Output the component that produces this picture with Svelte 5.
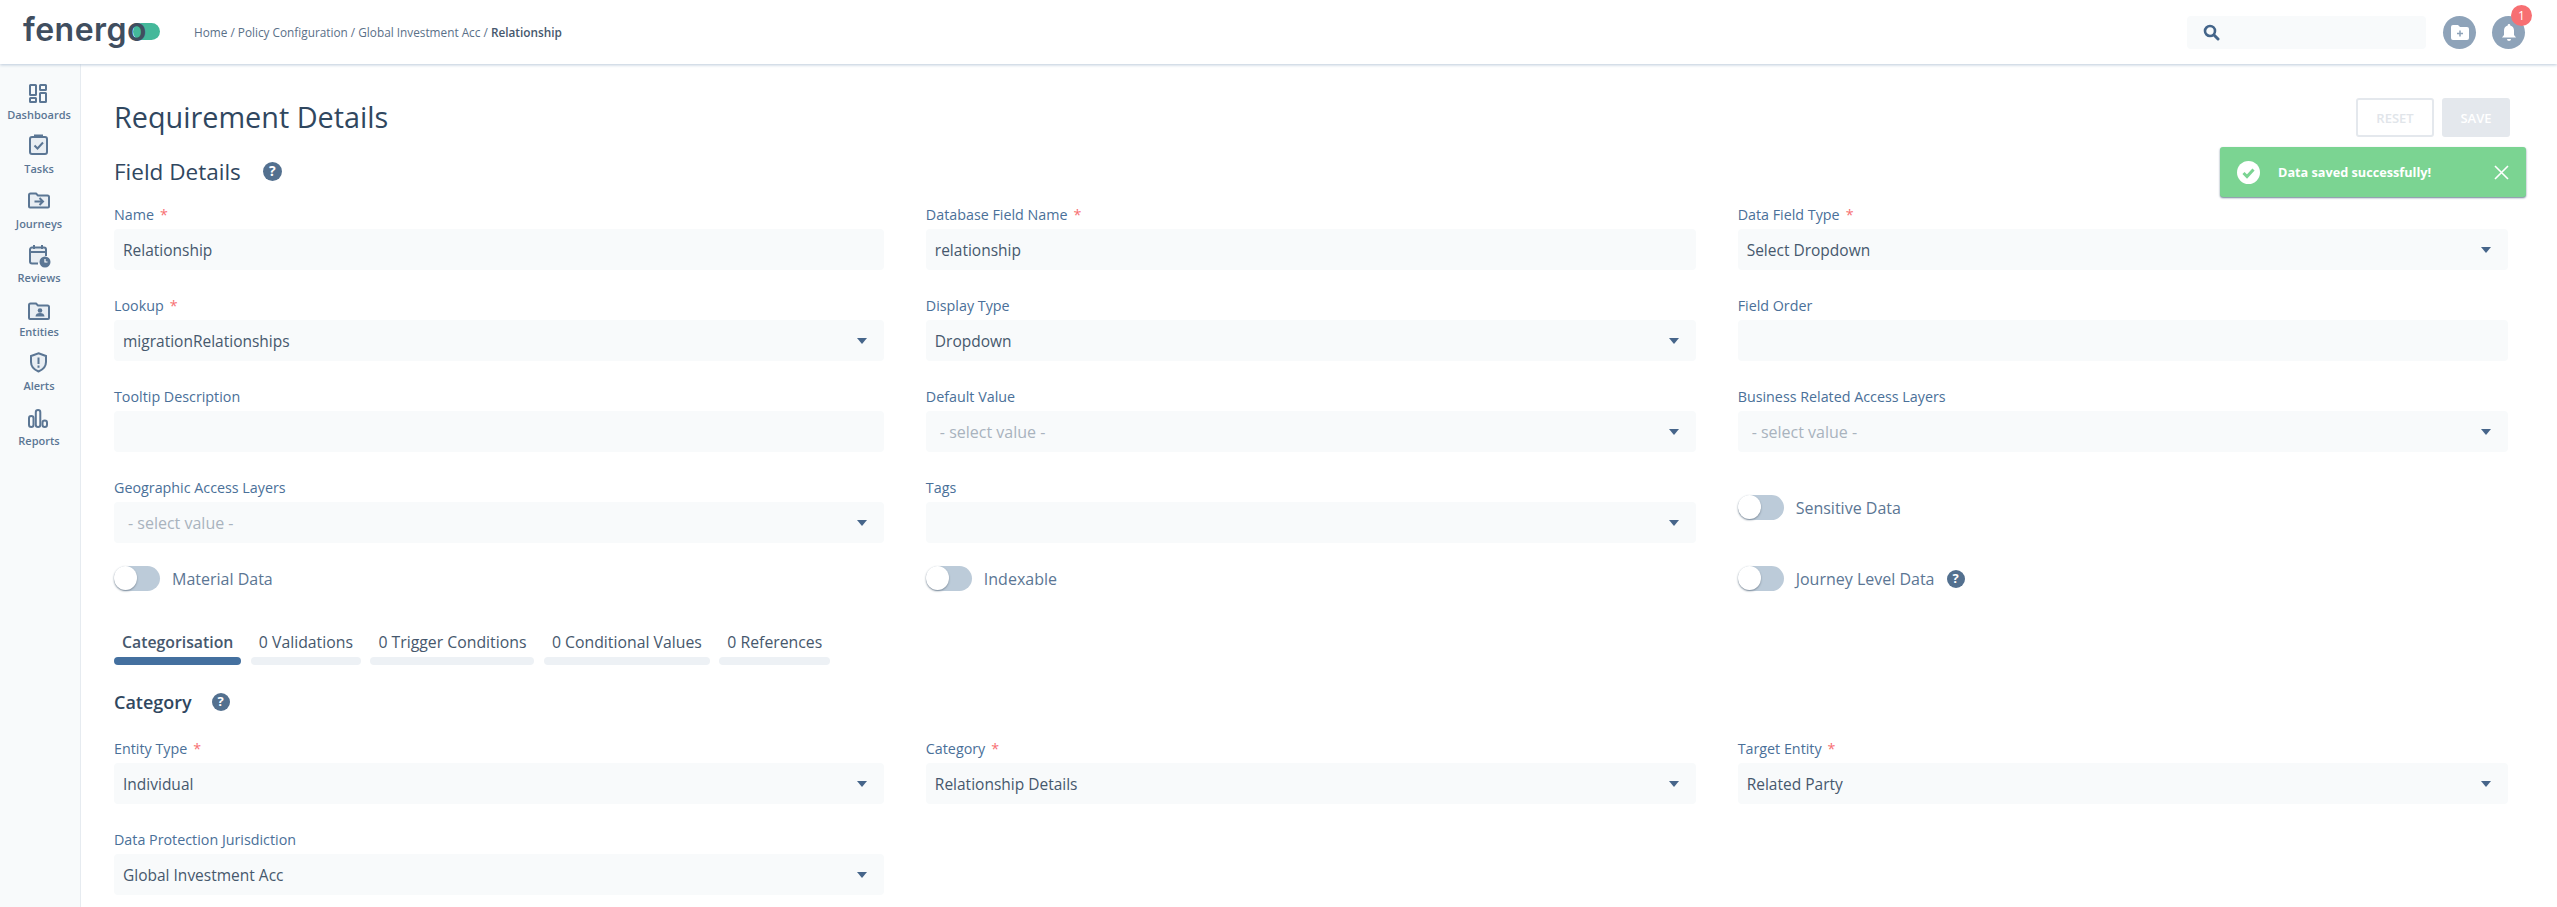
<script>
  const nav = [
    { label: 'Dashboards', icon: 'dash' },
    { label: 'Tasks', icon: 'tasks' },
    { label: 'Journeys', icon: 'journeys' },
    { label: 'Reviews', icon: 'reviews' },
    { label: 'Entities', icon: 'entities' },
    { label: 'Alerts', icon: 'alerts' },
    { label: 'Reports', icon: 'reports' }
  ];

  const fields = [
    { label: 'Name', req: true, value: 'Relationship' },
    { label: 'Database Field Name', req: true, value: 'relationship' },
    { label: 'Data Field Type', req: true, value: 'Select Dropdown', select: true },
    { label: 'Lookup', req: true, value: 'migrationRelationships', select: true },
    { label: 'Display Type', value: 'Dropdown', select: true },
    { label: 'Field Order', value: '' },
    { label: 'Tooltip Description', value: '' },
    { label: 'Default Value', placeholder: '- select value -', select: true },
    { label: 'Business Related Access Layers', placeholder: '- select value -', select: true },
    { label: 'Geographic Access Layers', placeholder: '- select value -', select: true },
    { label: 'Tags', value: '', select: true }
  ];

  const tabs = [
    { label: 'Categorisation', active: true },
    { label: '0 Validations' },
    { label: '0 Trigger Conditions' },
    { label: '0 Conditional Values' },
    { label: '0 References' }
  ];

  const category = [
    { label: 'Entity Type', req: true, value: 'Individual', select: true },
    { label: 'Category', req: true, value: 'Relationship Details', select: true },
    { label: 'Target Entity', req: true, value: 'Related Party', select: true },
    { label: 'Data Protection Jurisdiction', value: 'Global Investment Acc', select: true }
  ];
</script>

{#snippet help(size)}
  <span class="help" style="width:{size}px;height:{size}px;font-size:{size - 5}px">?</span>
{/snippet}

{#snippet field(f)}
  <div class="field">
    <div class="lbl">{f.label}{#if f.req}<span class="req">*</span>{/if}</div>
    <div class="box">
      {#if f.placeholder}<span class="ph">{f.placeholder}</span>{:else}<span>{f.value}</span>{/if}
      {#if f.select}<span class="arrow"></span>{/if}
    </div>
  </div>
{/snippet}

{#snippet toggle(label, cls, tip)}
  <div class="toggle {cls}">
    <span class="track"><span class="knob"></span></span>
    <span class="tlabel">{label}</span>
    {#if tip}{@render help(18)}{/if}
  </div>
{/snippet}

<div class="page">
  <header class="top">
    <div class="logo"><span class="pill"></span><span class="word">fenergo</span></div>
    <div class="crumbs">Home / Policy Configuration / Global Investment Acc / <b>Relationship</b></div>
    <div class="search">
      <svg width="17" height="17" viewBox="0 0 17 17"><circle cx="7" cy="7" r="5" fill="none" stroke="#44658a" stroke-width="2.6"/><path d="M11 11l4 4" stroke="#44658a" stroke-width="3" stroke-linecap="round"/></svg>
    </div>
    <div class="round">
      <svg width="20" height="17" viewBox="0 0 20 17"><path d="M1 3a2 2 0 0 1 2-2h5l2 2h7a2 2 0 0 1 2 2v9a2 2 0 0 1-2 2H3a2 2 0 0 1-2-2z" fill="#fff"/><path d="M10 6.500v6M7 9.500h6" stroke="#8ea3b9" stroke-width="1.500"/></svg>
    </div>
    <div class="round bell">
      <svg width="16" height="19" viewBox="0 0 16 19"><path d="M8 1a1.300 1.300 0 0 1 1.300 1.400C11.700 3 13 5 13 7.500V12l2 2.500H1L3 12V7.500C3 5 4.300 3 6.700 2.400A1.300 1.300 0 0 1 8 1z" fill="#fff"/><path d="M6 16h4a2 2 0 0 1-4 0z" fill="#fff"/></svg>
      <span class="badge">1</span>
    </div>
  </header>

  <div class="body">
    <nav class="side">
      {#each nav as n}
        <div class="nav-item">
          <svg width="24" height="24" viewBox="0 0 24 24" fill="none" stroke="#5b7694" stroke-width="2">
            {#if n.icon == 'dash'}
              <rect x="3" y="4" width="6" height="10" rx=".5"/><rect x="13" y="4" width="6" height="5" rx=".5"/><rect x="3" y="17" width="6" height="4" rx=".5"/><rect x="13" y="12" width="6" height="9" rx=".5"/>
            {:else if n.icon == 'tasks'}
              <rect x="3" y="2" width="17" height="17" rx="2" fill="#e9eef3"/><path d="M8 1.500V.500h7v1"/><path d="M7.500 10.500l3 3 5.500-6"/>
            {:else if n.icon == 'journeys'}
              <path d="M2 5a1.500 1.500 0 0 1 1.500-1.500H9l2 2h9.500A1.500 1.500 0 0 1 22 7v9.500a1 1 0 0 1-1 1H3a1 1 0 0 1-1-1z" fill="#e9eef3"/><path d="M7.500 11.500h8M12.500 8l3.500 3.500-3.500 3.500"/>
            {:else if n.icon == 'reviews'}
              <path d="M11 19.500H5a2 2 0 0 1-2-2V5.500a2 2 0 0 1 2-2h12a2 2 0 0 1 2 2V12" fill="#e9eef3"/><path d="M3 8h16M7 1v4M15 1v4"/><circle cx="18" cy="18" r="5.500" fill="#5b7694" stroke="none"/><path d="M18 15v3h2.500" stroke="#fff" stroke-width="1.200"/>
            {:else if n.icon == 'entities'}
              <path d="M2 7a1.500 1.500 0 0 1 1.500-1.500H9l2 2h9.500A1.500 1.500 0 0 1 22 9v11a1 1 0 0 1-1 1H3a1 1 0 0 1-1-1z" fill="#e9eef3"/><circle cx="13" cy="12.500" r="2.300" fill="#5b7694" stroke="none"/><path d="M8.500 18.500c0-2.500 2-3.500 4.500-3.500s4.500 1 4.500 3.500z" fill="#5b7694" stroke="none"/>
            {:else if n.icon == 'alerts'}
              <path d="M11.500 1.200l7.500 2.800v6c0 4.500-3.200 7.700-7.500 9.500-4.300-1.800-7.500-5-7.500-9.500V4z" fill="#e9eef3"/><path d="M11.500 5.500v6.500M11.500 13.500v2.200"/>
            {:else}
              <rect x="2" y="9" width="4.500" height="11" rx="2.250"/><rect x="8.800" y="3" width="4.500" height="17" rx="2.250"/><rect x="15.500" y="13.500" width="4.500" height="6.500" rx="2.250"/>
            {/if}
          </svg>
          <span>{n.label}</span>
        </div>
      {/each}
    </nav>

    <main class="main">
      <div class="head">
        <h1>Requirement Details</h1>
        <div class="actions">
          <button class="reset">RESET</button>
          <button class="save">SAVE</button>
        </div>
      </div>

      <h2 class="section">Field Details {@render help(19)}</h2>

      <div class="grid">
        {#each fields as f}
          {@render field(f)}
        {/each}
        {@render toggle('Sensitive Data', 'first')}
        {@render toggle('Material Data', 'last')}
        {@render toggle('Indexable', 'last')}
        {@render toggle('Journey Level Data', 'last', true)}
      </div>

      <div class="tabs">
        {#each tabs as t}
          <div class="tab" class:active={t.active}>
            <span class="tab-text">{t.label}</span>
            <span class="bar"></span>
          </div>
        {/each}
      </div>

      <h3 class="section small">Category {@render help(18)}</h3>

      <div class="grid second">
        {#each category as f}
          {@render field(f)}
        {/each}
      </div>
    </main>
  </div>

  <div class="toast">
    <svg width="23" height="23" viewBox="0 0 23 23"><circle cx="11.500" cy="11.500" r="11.500" fill="#fff"/><path d="M6.500 12l3.500 3.500 6.500-7" fill="none" stroke="#7bd492" stroke-width="3"/></svg>
    <span>Data saved successfully!</span>
    <svg class="close" width="15" height="15" viewBox="0 0 15 15"><path d="M1 1l13 13M14 1L1 14" stroke="#fff" stroke-width="1.600"/></svg>
  </div>
</div>

<style>
  :global(body) {
    margin: 0;
    background: #fff;
    font-family: "Open Sans", "Noto Sans", sans-serif;
    color: #46586d;
  }
  .page {
    position: relative;
    height: 907px;
    overflow: hidden;
  }
  .top {
    height: 64px;
    display: flex;
    align-items: center;
    background: #fff;
    box-shadow: 0 1px 3px #bccada;
    position: relative;
    z-index: 2;
  }
  .logo {
    position: relative;
    margin-left: 23px;
    width: 137px;
    height: 48px;
    align-self: flex-start;
    margin-top: 8px;
  }
  .word {
    position: relative;
    font-family: "Inter", sans-serif;
    font-size: 32px;
    font-weight: 600;
    line-height: 44px;
    color: #404e5f;
    letter-spacing: 0.5px;
  }
  .pill {
    position: absolute;
    left: 110px;
    top: 15px;
    width: 27px;
    height: 17px;
    border-radius: 9px;
    background: #44b89a;
  }
  .crumbs {
    margin-left: 34px;
    font-size: 11.800px;
    color: #5a7088;
  }
  .crumbs b {
    font-weight: 600;
    color: #46586d;
  }
  .search {
    margin-left: auto;
    width: 239px;
    height: 33px;
    background: #f8fafb;
    border-radius: 4px;
    display: flex;
    align-items: center;
    padding-left: 16px;
    box-sizing: border-box;
  }
  .round {
    position: relative;
    width: 33px;
    height: 33px;
    border-radius: 50%;
    background: #8ea3b9;
    display: flex;
    align-items: center;
    justify-content: center;
    margin-left: 17px;
  }
  .bell {
    margin-left: 16px;
    margin-right: 32px;
  }
  .badge {
    position: absolute;
    right: -7px;
    top: -11px;
    width: 21px;
    height: 21px;
    border-radius: 50%;
    background: #f76f72;
    color: #fff;
    font-size: 12px;
    text-align: center;
    line-height: 21px;
  }
  .body {
    display: flex;
    height: 843px;
  }
  .side {
    width: 78px;
    flex: none;
    background: #f8fafb;
    border-right: 1px solid #e6ebf0;
    padding: 17px 2px 0 0;
  }
  .nav-item {
    height: 54.300px;
    display: flex;
    flex-direction: column;
    align-items: center;
    font-size: 11px;
    font-weight: 600;
    color: #5b7694;
  }
  .nav-item svg {
    overflow: visible;
    flex: none;
  }
  .nav-item span {
    line-height: 14px;
    margin-top: 3px;
  }
  .main {
    flex: 1;
    padding: 0 49px 0 33px;
    min-width: 0;
  }
  .head {
    height: 78px;
    display: flex;
    justify-content: space-between;
    align-items: flex-end;
  }
  h1 {
    margin: 0;
    font-size: 28.800px;
    font-weight: 400;
    line-height: 40px;
    color: #30475f;
    padding-bottom: 5px;
  }
  .actions {
    display: flex;
    gap: 8px;
    padding-bottom: 5px;
    margin-right: -2px;
  }
  button {
    font: 600 13px "Open Sans", sans-serif;
    border-radius: 3px;
    height: 39px;
    box-sizing: border-box;
  }
  .reset {
    width: 78px;
    background: #fff;
    border: 2px solid #e4e8ed;
    color: #e1e5ea;
  }
  .save {
    width: 68px;
    background: #e4e8ed;
    border: 0;
    color: #fff;
  }
  .section {
    margin: 0;
    display: flex;
    align-items: center;
    gap: 22px;
    height: 30px;
    margin-top: 14px;
    font-size: 22.500px;
    font-weight: 400;
    color: #30475f;
  }
  .small {
    font-size: 18px;
    font-weight: 600;
    margin-top: 22px;
    gap: 20px;
    height: 30px;
  }
  .help {
    display: inline-block;
    border-radius: 50%;
    background: #53708f;
    color: #fff;
    font-weight: 700;
    text-align: center;
    line-height: 1.350;
  }
  .grid {
    display: grid;
    grid-template-columns: repeat(3, 1fr);
    column-gap: 41.500px;
    row-gap: 26px;
    margin-top: 19px;
  }
  .second {
    margin-top: 22px;
  }
  .lbl {
    font-size: 14.300px;
    line-height: 19px;
    color: #4a7099;
    height: 24px;
  }
  .req {
    color: #f76f72;
    margin-left: 6px;
  }
  .box {
    height: 41px;
    background: #f8fafb;
    border-radius: 4px;
    padding: 0 9px;
    display: flex;
    align-items: center;
    justify-content: space-between;
    font-size: 15.500px;
    color: #46586d;
  }
  .ph {
    color: #a9b3be;
    padding-left: 5px;
    font-size: 16px;
  }
  .arrow {
    width: 0;
    height: 0;
    margin-right: 8px;
    margin-left: auto;
    border-left: 5px solid transparent;
    border-right: 5px solid transparent;
    border-top: 6px solid #46658a;
  }
  .toggle {
    display: flex;
    align-items: center;
    gap: 12px;
    height: 25px;
    font-size: 16px;
    color: #5b7694;
  }
  .toggle.first {
    margin-top: 17px;
  }
  .toggle.last {
    margin-top: -3px;
  }
  .track {
    position: relative;
    width: 46px;
    height: 25px;
    border-radius: 13px;
    background: #bccbd9;
    flex: none;
  }
  .knob {
    position: absolute;
    left: 0;
    top: 0;
    width: 23px;
    height: 24px;
    border-radius: 50%;
    background: #fff;
    box-shadow: 0 1px 2px #7d8b99;
  }
  .tabs {
    display: flex;
    gap: 9.500px;
    margin-top: 40px;
  }
  .tab {
    display: flex;
    flex-direction: column;
    font-size: 15.800px;
    line-height: 22px;
    color: #46586d;
  }
  .tab-text {
    padding: 0 8px 4px;
  }
  .bar {
    display: block;
    height: 8px;
    border-radius: 4px;
    background: #edf1f5;
  }
  .tab.active {
    font-weight: 600;
  }
  .tab.active .bar {
    background: #44709f;
  }
  .toast {
    position: absolute;
    left: 2220px;
    top: 147px;
    width: 306px;
    height: 50px;
    box-sizing: border-box;
    background: #7bd492;
    border-radius: 3px;
    box-shadow: 0 1px 2px #6f8196;
    display: flex;
    align-items: center;
    padding: 0 17px;
    gap: 18px;
    color: #fff;
    font-size: 12.700px;
    font-weight: 700;
    z-index: 3;
  }
  .close {
    margin-left: auto;
  }
</style>
